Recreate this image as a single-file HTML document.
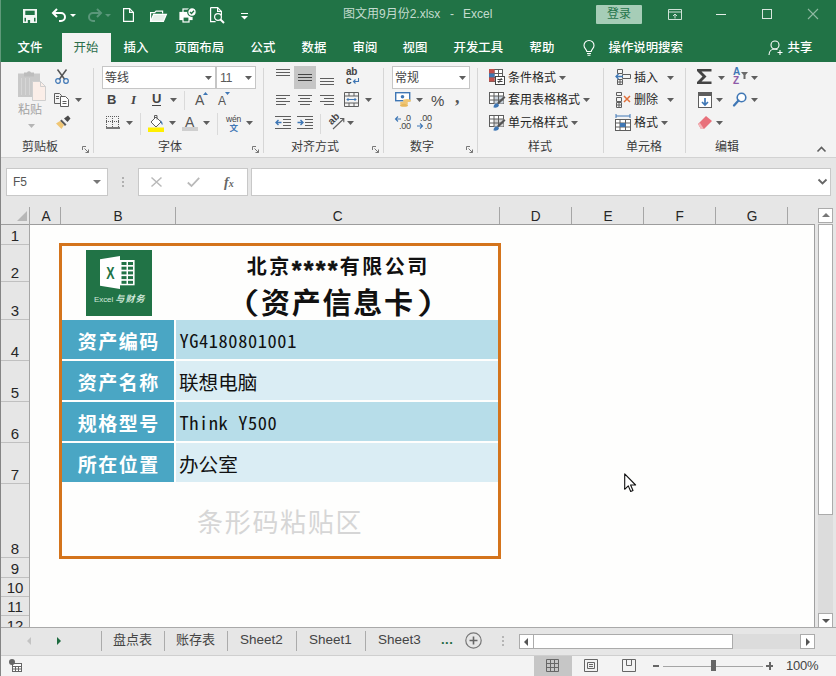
<!DOCTYPE html>
<html lang="zh-CN">
<head>
<meta charset="utf-8">
<title>图文用9月份2.xlsx - Excel</title>
<style>
*{box-sizing:border-box;margin:0;padding:0}
html,body{width:836px;height:676px;overflow:hidden;background:#e6e6e6}
body{position:relative;font-family:"Liberation Sans","Noto Sans CJK SC",sans-serif;font-size:12px;color:#262626}
.a{position:absolute}
.t{position:absolute;white-space:nowrap;line-height:1}
svg{position:absolute;overflow:visible}
/* title + tabs */
#green{left:0;top:0;width:836px;height:62px;background:#217346}
.tab{position:absolute;top:39.600px;color:#fff;font-weight:500;font-size:12.400px;margin-left:-.5px;line-height:16px;white-space:nowrap}
#tabon{left:62px;top:33px;width:49px;height:29px;background:#f3f3f3}
/* ribbon */
#ribbon{left:0;top:62px;width:836px;height:95px;background:#f3f3f3}
#ribline{left:0;top:157px;width:836px;height:1px;background:#d2d2d2}
.sep{position:absolute;top:68px;width:1px;height:85px;background:#d6d6d6}
.gl{position:absolute;top:139px;font-size:12px;line-height:16px;color:#3b3b3b;white-space:nowrap;text-align:center}
.rt{position:absolute;font-size:12px;line-height:16px;color:#262626;white-space:nowrap}
.dd{position:absolute;width:0;height:0;border-left:3px solid transparent;border-right:3px solid transparent;border-top:3px solid #606060}
/* formula bar */
.box{position:absolute;background:#fff;border:1px solid #c8c8c8}
/* sheet */
#sheet{left:30px;top:224px;width:785px;height:403px;background:#fefefd}
.ch span{display:inline-block;transform:scaleX(.88)}
.ch{position:absolute;top:207px;height:17px;font-size:15.500px;line-height:18px;padding-left:2px;text-align:center;color:#262626;border-right:1px solid #a6a6a6}
.rh{position:absolute;left:1px;width:28px;font-size:15px;text-align:center;color:#262626;border-bottom:1px solid #c0c0c0;background:#e6e6e6}
.rh span{position:absolute;left:0;right:0;bottom:0;line-height:17px}
.mono{font-family:"Noto Sans CJK SC",sans-serif;font-feature-settings:"hwid";font-size:18.400px;letter-spacing:.6px;line-height:24px;color:#111;white-space:pre}
.ast{font-family:"Liberation Sans",sans-serif;font-size:25px;line-height:1;letter-spacing:2.300px;position:relative;top:5px;-webkit-text-stroke:.5px #111}
.par{display:inline-block;font-weight:500;transform:scaleX(1.4)}
</style>
</head>
<body>
<div class="a" id="green"></div>
<div class="a" id="tabon"></div>
<!--TITLE-->
<!-- quick access toolbar -->
<svg style="left:23px;top:9px" width="14" height="14" viewBox="0 0 14 14"><path d="M0 0h14v14H0z" fill="#f1f6f3"/><rect x="2.300" y="1.700" width="9.400" height="4.300" fill="#217346"/><rect x="1.500" y="8.800" width="1.500" height="3.700" fill="#217346"/><rect x="11" y="8.800" width="1.500" height="3.700" fill="#217346"/><rect x="4.800" y="11" width="2.300" height="3" fill="#217346"/></svg>
<svg style="left:51px;top:8px" width="16" height="14" viewBox="0 0 16 14" fill="none" stroke="#fff" stroke-width="2"><path d="M6 1L2 5l4 4"/><path d="M2.5 5H10a4 4 0 0 1 0 8H8"/></svg>
<div class="dd" style="left:70px;top:14px;border-top-color:#fff"></div>
<svg style="left:87px;top:8px" width="16" height="14" viewBox="0 0 16 14" fill="none" stroke="#5a977a" stroke-width="2"><path d="M10 1l4 4-4 4"/><path d="M13.5 5H6a4 4 0 0 0 0 8h2"/></svg>
<div class="dd" style="left:105px;top:14px;border-top-color:#5a977a"></div>
<svg style="left:123px;top:8px" width="11" height="14" viewBox="0 0 11 14" fill="none" stroke="#fff" stroke-width="1.2"><path d="M.6.6h6l3.800 3.800v9H.6z"/><path d="M6.600.6v3.800h3.800"/></svg>
<svg style="left:150px;top:9px" width="17" height="13" viewBox="0 0 17 13" fill="none" stroke="#fff" stroke-width="1.2"><path d="M.6 12.400V3.600h4l1.500-1.500h6.500v2.500"/><path d="M.6 12.400l3-7h12.800l-3 7z" fill="#e6efe9"/></svg>
<svg style="left:179px;top:7px" width="18" height="17" viewBox="0 0 18 17" fill="none" stroke="#fff" stroke-width="1.2"><rect x="1" y="5.500" width="12" height="7" fill="#fff"/><rect x="4" y="10" width="6" height="5" fill="#217346"/><rect x="4" y="2" width="6" height="3.500" fill="#217346"/><circle cx="13" cy="5" r="4.300" fill="#fff" stroke="#217346"/><path d="M11 5l1.500 1.500L15 3.800" stroke="#217346" stroke-width="1.300"/></svg>
<svg style="left:210px;top:7px" width="16" height="17" viewBox="0 0 16 17" fill="none" stroke="#fff" stroke-width="1.2"><path d="M.6.6h7l3.800 3.800v4M.6.6v14h5"/><path d="M7.600.6v3.800h3.800"/><circle cx="8" cy="10" r="3.400"/><path d="M10.500 12.500l3.500 3.500" stroke-width="2"/></svg>
<div class="a" style="left:241px;top:13px;width:7px;height:1px;background:#fff"></div>
<svg style="left:241px;top:16px" width="7" height="4" viewBox="0 0 7 4"><path d="M0 0h7L3.500 3.500z" fill="#fff"/></svg>
<div class="t" style="left:343px;top:7px;width:150px;height:15px;font-size:12px;line-height:15px;color:#c4dccf;white-space:pre"><span class="a" style="left:0;top:0">图文用9月份2.xlsx</span><span class="a" style="left:107px;top:0">-</span><span class="a" style="left:120px;top:0">Excel</span></div>
<div class="a" style="left:596px;top:5px;width:46px;height:19px;background:#a6cdb7;border-radius:1px"></div>
<div class="t" style="left:607px;top:7px;font-size:12px;line-height:15px;color:#25744a">登录</div>
<svg style="left:668px;top:9px" width="14" height="11" viewBox="0 0 14 11" fill="none" stroke="#cfe2d7" stroke-width="1"><path d="M.5.5h13v10H.5zM.5 3h13"/><path d="M7 9.500V5M5 7l2-2 2 2"/></svg>
<div class="a" style="left:716px;top:14px;width:10px;height:1px;background:#e4eee8"></div>
<div class="a" style="left:762px;top:9px;width:10px;height:10px;border:1px solid #d8e6de"></div>
<svg style="left:808px;top:9px" width="10" height="10" viewBox="0 0 10 10" stroke="#8fb9a2" stroke-width="1.1"><path d="M0 0l10 10M10 0L0 10"/></svg>
<!--TABS-->
<div class="tab" style="left:18px">文件</div>
<div class="tab" style="left:74px;color:#2d6e4b;font-weight:400">开始</div>
<div class="tab" style="left:124px">插入</div>
<div class="tab" style="left:175px">页面布局</div>
<div class="tab" style="left:251px">公式</div>
<div class="tab" style="left:302px">数据</div>
<div class="tab" style="left:353px">审阅</div>
<div class="tab" style="left:403px">视图</div>
<div class="tab" style="left:454px">开发工具</div>
<div class="tab" style="left:530px">帮助</div>
<svg style="left:583px;top:40px" width="12" height="16" viewBox="0 0 12 16" fill="none" stroke="#fff" stroke-width="1.1"><path d="M3.800 11.500c0-2-2.800-3-2.800-6a5 5 0 0 1 10 0c0 3-2.800 4-2.800 6z"/><path d="M4 13.500h4M4.500 15.300h3"/></svg>
<div class="tab" style="left:609px">操作说明搜索</div>
<svg style="left:768px;top:40px" width="16" height="16" viewBox="0 0 16 16" fill="none" stroke="#fff" stroke-width="1.1"><circle cx="7" cy="5" r="4"/><path d="M1 15c0-4 3-6 6-6 1 0 2 .3 2.500.6"/><path d="M12 10v5M9.500 12.500h5"/></svg>
<div class="tab" style="left:788px">共享</div>
<div class="a" id="ribbon"></div>
<div class="a" id="ribline"></div>
<!--RIBBON-->
<div class="sep" style="left:93px"></div>
<div class="sep" style="left:263px"></div>
<div class="sep" style="left:383px"></div>
<div class="sep" style="left:477px"></div>
<div class="sep" style="left:603px"></div>
<div class="sep" style="left:685px"></div>
<svg style="left:18px;top:70px" width="28" height="31" viewBox="0 0 28 31">
<rect x="0" y="3.500" width="22" height="23.500" fill="#c9c9c9"/>
<path d="M6 3.500V2.500h3a2.200 2.200 0 0 1 4 0h3v4H6z" fill="#bdbdbd"/>
<g stroke="#d6d6d6" stroke-width="1"><path d="M3.500 8v17M7.500 8v17M11.500 8v17"/></g>
<path d="M14.500 11.500h8l5 5v14h-13z" fill="#fbeee8" stroke="#cfcfcf"/>
<path d="M22.500 11.500v5h5" fill="none" stroke="#cfcfcf"/>
</svg>
<div class="rt" style="left:18px;top:102px;color:#a3a3a3">粘贴</div>
<svg style="left:27.5px;top:124px" width="7" height="4" viewBox="0 0 7 4"><path d="M0 0h7L3.500 4z" fill="#b5b5b5"/></svg>
<svg style="left:55px;top:69px" width="14" height="15" viewBox="0 0 14 15" fill="none">
<path d="M2.500 0.500L9.800 10.500M11.500 0.500L4.200 10.500" stroke="#555" stroke-width="1.5"/>
<circle cx="3" cy="12" r="2.300" stroke="#3f77b5" stroke-width="1.200"/><circle cx="11" cy="12" r="2.300" stroke="#3f77b5" stroke-width="1.200"/></svg>
<svg style="left:54px;top:93px" width="15" height="14" viewBox="0 0 15 14" fill="#f3f3f3" stroke="#5e5e5e" stroke-width="1">
<path d="M.5.5h5l2 2v8h-7z"/><path d="M6.500 3.500h5l3 3v7h-8z" fill="#fff"/><path d="M8.500 8.500h4M8.500 10.500h4M2 3.500h3M2 5.500h3" stroke-width="1"/></svg>
<svg style="left:75.0px;top:98px" width="7" height="4" viewBox="0 0 7 4"><path d="M0 0h7L3.500 4z" fill="#5e5e5e"/></svg>
<svg style="left:55px;top:115px" width="16" height="14" viewBox="0 0 16 14">
<path d="M9 3.500l3.500 3.500 3-3.500L13 .5z" fill="#4a4a4a"/><path d="M6.500 4.500l5 5-1.500 1.500-5-5z" fill="#5a5a5a"/>
<path d="M1 8.500l4-2.500 4 4-2.500 4z" fill="#f0c674"/></svg>
<div class="gl" style="left:22px">剪贴板</div>
<svg style="left:82px;top:146px" width="7" height="7" viewBox="0 0 7 7" fill="none" stroke="#777" stroke-width="1"><path d="M.5 4V.5H4"/><path d="M2.500 2.500l4 4M6.500 3.500v3h-3"/></svg>
<div class="box" style="left:102px;top:66px;width:114px;height:23px;border-color:#c6c6c6"></div>
<div class="box" style="left:216px;top:66px;width:40px;height:23px;border-color:#c6c6c6"></div>
<div class="rt" style="left:105px;top:70px;color:#444">等线</div>
<svg style="left:205.0px;top:76px" width="7" height="4" viewBox="0 0 7 4"><path d="M0 0h7L3.500 4z" fill="#5e5e5e"/></svg>
<div class="rt" style="left:220px;top:70px;color:#5a5a5a;font-size:12.500px;letter-spacing:-.5px">11</div>
<svg style="left:245.0px;top:76px" width="7" height="4" viewBox="0 0 7 4"><path d="M0 0h7L3.500 4z" fill="#5e5e5e"/></svg>
<div class="rt" style="left:107px;top:92px;font-weight:bold;font-size:13px;color:#444">B</div>
<div class="rt" style="left:131px;top:92px;font-weight:bold;font-style:italic;font-size:13px;color:#444;font-family:'Liberation Serif',serif">I</div>
<div class="rt" style="left:152px;top:91px;font-weight:bold;font-size:13px;color:#444">U</div>
<div class="a" style="left:152px;top:105px;width:9px;height:1px;background:#444"></div>
<svg style="left:170.0px;top:98px" width="7" height="4" viewBox="0 0 7 4"><path d="M0 0h7L3.500 4z" fill="#5e5e5e"/></svg>
<div class="a" style="left:184px;top:91px;width:1px;height:19px;background:#dadada"></div>
<div class="rt" style="left:195px;top:92px;font-size:14px;color:#555">A</div>
<svg style="left:203px;top:92px" width="5" height="3" viewBox="0 0 5 3"><path d="M0 3L2.500 0 5 3z" fill="#3f77b5"/></svg>
<div class="rt" style="left:218px;top:93px;font-size:12px;color:#555">A</div>
<svg style="left:225px;top:92px" width="5" height="3" viewBox="0 0 5 3"><path d="M0 0h5L2.500 3z" fill="#3f77b5"/></svg>
<svg style="left:106px;top:116px" width="14" height="13" viewBox="0 0 14 13" fill="none" stroke="#5e5e5e" stroke-width="1">
<path d="M.5 0v11M6.500 0v11M12.500 0v11M0 .5h13M0 5.500h13" stroke-dasharray="1 1"/><path d="M0 12h14" stroke="#444" stroke-width="1.400"/></svg>
<svg style="left:126.0px;top:121px" width="7" height="4" viewBox="0 0 7 4"><path d="M0 0h7L3.500 4z" fill="#5e5e5e"/></svg>
<div class="a" style="left:140px;top:113px;width:1px;height:22px;background:#dadada"></div>
<svg style="left:148px;top:114px" width="17" height="18" viewBox="0 0 17 18">
<path d="M3 8l5-5 5 5-5 5z" fill="#fff" stroke="#5e5e5e" stroke-width="1"/><path d="M6.500 4.500V1.500h2.500v4" fill="none" stroke="#5e5e5e"/>
<path d="M12 6c2 1 3 3 2.500 5-1-.5-1.500-2-2-3.500z" fill="#3f77b5"/><rect x="0" y="13.500" width="16" height="4.500" fill="#ffef00"/></svg>
<svg style="left:169.0px;top:121px" width="7" height="4" viewBox="0 0 7 4"><path d="M0 0h7L3.500 4z" fill="#5e5e5e"/></svg>
<div class="rt" style="left:185px;top:114px;font-size:14px;color:#555">A</div>
<div class="a" style="left:182px;top:127px;width:16px;height:4px;background:#cfcfcf"></div>
<svg style="left:203.0px;top:121px" width="7" height="4" viewBox="0 0 7 4"><path d="M0 0h7L3.500 4z" fill="#5e5e5e"/></svg>
<div class="a" style="left:217px;top:113px;width:1px;height:22px;background:#dadada"></div>
<div class="rt" style="left:226px;top:113px;font-size:8.500px;line-height:12px;color:#444;letter-spacing:-.2px">wén</div>
<div class="rt" style="left:229.500px;top:122px;font-size:8.500px;line-height:12px;color:#3f77b5;font-weight:bold">文</div>
<svg style="left:246.0px;top:121px" width="7" height="4" viewBox="0 0 7 4"><path d="M0 0h7L3.500 4z" fill="#5e5e5e"/></svg>
<div class="gl" style="left:158px">字体</div>
<svg style="left:252px;top:146px" width="7" height="7" viewBox="0 0 7 7" fill="none" stroke="#777" stroke-width="1"><path d="M.5 4V.5H4"/><path d="M2.500 2.500l4 4M6.500 3.500v3h-3"/></svg>
<div class="a" style="left:294px;top:66px;width:22px;height:23px;background:#c6c6c6"></div>
<svg style="left:276px;top:69px" width="14" height="9" viewBox="0 0 14 9" fill="#5e5e5e"><rect x="0" y="0" width="14" height="1"/><rect x="0" y="3" width="14" height="1"/><rect x="0" y="6" width="14" height="1"/></svg>
<svg style="left:298px;top:74px" width="14" height="9" viewBox="0 0 14 9" fill="#444"><rect x="0" y="0" width="14" height="1"/><rect x="0" y="3" width="14" height="1"/><rect x="0" y="6" width="14" height="1"/></svg>
<svg style="left:320px;top:78px" width="14" height="9" viewBox="0 0 14 9" fill="#5e5e5e"><rect x="0" y="0" width="14" height="1"/><rect x="0" y="3" width="14" height="1"/><rect x="0" y="6" width="14" height="1"/></svg>
<svg style="left:276px;top:95px" width="14" height="12" viewBox="0 0 14 12" fill="#5e5e5e"><rect x="0" y="0" width="14" height="1"/><rect x="0" y="3" width="10" height="1"/><rect x="0" y="6" width="14" height="1"/><rect x="0" y="9" width="10" height="1"/></svg>
<svg style="left:298px;top:95px" width="14" height="12" viewBox="0 0 14 12" fill="#5e5e5e"><rect x="0" y="0" width="14" height="1"/><rect x="2" y="3" width="10" height="1"/><rect x="0" y="6" width="14" height="1"/><rect x="2" y="9" width="10" height="1"/></svg>
<svg style="left:320px;top:95px" width="14" height="12" viewBox="0 0 14 12" fill="#5e5e5e"><rect x="0" y="0" width="14" height="1"/><rect x="4" y="3" width="10" height="1"/><rect x="0" y="6" width="14" height="1"/><rect x="4" y="9" width="10" height="1"/></svg>
<div class="rt" style="left:346px;top:67px;font-size:10px;line-height:9px;color:#444;font-weight:bold;letter-spacing:-.2px">ab<br>c</div>
<svg style="left:353px;top:78px" width="6" height="6" viewBox="0 0 6 6" fill="none" stroke="#3f77b5" stroke-width="1.100"><path d="M5.500 0v3.500H1M2.500 1.500l-2 2 2 2"/></svg>
<svg style="left:344px;top:92px" width="15" height="15" viewBox="0 0 15 15" fill="none" stroke="#5e5e5e" stroke-width="1">
<path d="M.5.500h14v14H.5z"/><path d="M.5 4h14M.5 11h14M5 .5V4M10 .5V4M5 11v3.500M10 11v3.500"/><path d="M3 7.500h9M4.500 6L3 7.500 4.500 9M10.500 6L12 7.500 10.500 9" stroke="#3f77b5"/></svg>
<svg style="left:365.0px;top:98px" width="7" height="4" viewBox="0 0 7 4"><path d="M0 0h7L3.500 4z" fill="#5e5e5e"/></svg>
<svg style="left:275px;top:116px" width="16" height="13" viewBox="0 0 16 13" fill="none">
<path d="M0 .5h16M8 3.500h8M8 6.500h8M8 9.500h8M0 12.500h16" stroke="#5e5e5e"/><path d="M6.500 6.500H1M3.500 4L1 6.500 3.500 9" stroke="#3f77b5" stroke-width="1.400"/></svg>
<svg style="left:297px;top:116px" width="16" height="13" viewBox="0 0 16 13" fill="none">
<path d="M0 .5h16M8 3.500h8M8 6.500h8M8 9.500h8M0 12.500h16" stroke="#5e5e5e"/><path d="M.5 6.500H6M3.500 4L6 6.500 3.500 9" stroke="#3f77b5" stroke-width="1.400"/></svg>
<div class="a" style="left:320px;top:114px;width:1px;height:20px;background:#dadada"></div>
<div class="rt" style="left:328px;top:113px;font-size:10px;line-height:12px;color:#444;font-weight:bold;transform:rotate(-45deg);transform-origin:50% 50%">ab</div>
<svg style="left:331px;top:117px" width="14" height="13" viewBox="0 0 14 13" fill="none" stroke="#5e5e5e" stroke-width="1.100"><path d="M2 12L12.500 2M9 1.500h3.800v3.800"/></svg>
<svg style="left:347.0px;top:121px" width="7" height="4" viewBox="0 0 7 4"><path d="M0 0h7L3.500 4z" fill="#5e5e5e"/></svg>
<div class="gl" style="left:291px">对齐方式</div>
<svg style="left:372px;top:146px" width="7" height="7" viewBox="0 0 7 7" fill="none" stroke="#777" stroke-width="1"><path d="M.5 4V.5H4"/><path d="M2.500 2.500l4 4M6.500 3.500v3h-3"/></svg>
<div class="box" style="left:392px;top:66px;width:78px;height:23px;border-color:#c6c6c6"></div>
<div class="rt" style="left:395px;top:70px;color:#444">常规</div>
<svg style="left:459.0px;top:76px" width="7" height="4" viewBox="0 0 7 4"><path d="M0 0h7L3.500 4z" fill="#5e5e5e"/></svg>
<svg style="left:395px;top:92px" width="17" height="15" viewBox="0 0 17 15">
<rect x=".7" y=".7" width="14" height="8" fill="#fff" stroke="#3f77b5" stroke-width="1.400"/><circle cx="7.500" cy="4.700" r="1.800" fill="#3f77b5"/>
<ellipse cx="12" cy="8.500" rx="4" ry="1.500" fill="#f0c674"/><ellipse cx="9" cy="11" rx="4" ry="1.500" fill="#f0c674"/><ellipse cx="9" cy="13.300" rx="4" ry="1.500" fill="#e8b85c"/></svg>
<svg style="left:416.0px;top:98px" width="7" height="4" viewBox="0 0 7 4"><path d="M0 0h7L3.500 4z" fill="#5e5e5e"/></svg>
<div class="rt" style="left:431px;top:92px;font-size:15px;line-height:18px;color:#4a4a4a">%</div>
<div class="rt" style="left:455px;top:88px;font-size:18px;line-height:18px;color:#555;font-weight:bold;font-family:'Liberation Serif',serif">,</div>
<div class="rt" style="left:399px;top:114px;font-size:9px;line-height:8px;color:#444;text-align:right;letter-spacing:-.2px">.0<br>.00</div>
<svg style="left:395px;top:116px" width="6" height="6" viewBox="0 0 6 6" fill="none" stroke="#3f77b5" stroke-width="1.100"><path d="M6 3H.8M3 .5L.5 3 3 5.500"/></svg>
<div class="rt" style="left:420px;top:114px;font-size:9px;line-height:8px;color:#444;text-align:right;letter-spacing:-.2px">.00<br>.0</div>
<svg style="left:417px;top:123px" width="6" height="6" viewBox="0 0 6 6" fill="none" stroke="#3f77b5" stroke-width="1.100"><path d="M0 3h5.200M3 .5L5.500 3 3 5.500"/></svg>
<div class="gl" style="left:410px">数字</div>
<svg style="left:466px;top:146px" width="7" height="7" viewBox="0 0 7 7" fill="none" stroke="#777" stroke-width="1"><path d="M.5 4V.5H4"/><path d="M2.500 2.500l4 4M6.500 3.500v3h-3"/></svg>
<svg style="left:489px;top:69px" width="16" height="16" viewBox="0 0 16 16">
<rect x=".5" y=".5" width="13" height="12" fill="#fff" stroke="#5e5e5e"/><path d="M.5 4.500h13M.5 8.500h13M5 .5v12M9.500 .5v12" stroke="#5e5e5e" fill="none"/>
<rect x="0" y="0" width="5.500" height="4.500" fill="#c0504d"/><rect x="0" y="4.500" width="5.500" height="4" fill="#3f77b5"/><rect x="0" y="8.500" width="5.500" height="4" fill="#c0504d"/>
<rect x="6.500" y="7.500" width="9" height="8" fill="#fff" stroke="#444"/><path d="M8.500 10.500h5M8.500 12.500h5M12.500 9l-3 5" stroke="#444" fill="none"/></svg>
<div class="rt" style="left:508px;top:70px">条件格式</div>
<svg style="left:559.0px;top:76px" width="7" height="4" viewBox="0 0 7 4"><path d="M0 0h7L3.500 4z" fill="#5e5e5e"/></svg>
<svg style="left:489px;top:92px" width="17" height="16" viewBox="0 0 17 16">
<rect x=".5" y=".5" width="14" height="11" fill="#fff" stroke="#5e5e5e"/><rect x="5" y="4" width="9.500" height="7.500" fill="#c9d3dd"/>
<path d="M.5 4h14M.5 8h14M5 .5v11M9.500 .5v11" stroke="#5e5e5e" fill="none"/>
<path d="M8 11l7-7 1.500 1.500-7 7z" fill="#555"/><path d="M4.500 15.500c0-3 2-4.500 4-4l1.500 1.500c0 2-2.500 3-5.500 2.500z" fill="#3f77b5"/></svg>
<div class="rt" style="left:508px;top:92px">套用表格格式</div>
<svg style="left:583.0px;top:98px" width="7" height="4" viewBox="0 0 7 4"><path d="M0 0h7L3.500 4z" fill="#5e5e5e"/></svg>
<svg style="left:489px;top:115px" width="17" height="16" viewBox="0 0 17 16">
<rect x=".5" y=".5" width="14" height="11" fill="#fff" stroke="#5e5e5e"/><rect x="5" y="4" width="9.500" height="7.500" fill="#d4d4d4"/>
<path d="M.5 4h14M.5 8h14M5 .5v11M9.500 .5v11" stroke="#5e5e5e" fill="none"/>
<path d="M8 11l7-7 1.500 1.500-7 7z" fill="#555"/><path d="M4.500 15.500c0-3 2-4.500 4-4l1.500 1.500c0 2-2.500 3-5.500 2.500z" fill="#3f77b5"/></svg>
<div class="rt" style="left:508px;top:115px">单元格样式</div>
<svg style="left:571.0px;top:121px" width="7" height="4" viewBox="0 0 7 4"><path d="M0 0h7L3.500 4z" fill="#5e5e5e"/></svg>
<div class="gl" style="left:528px">样式</div>
<svg style="left:615px;top:69px" width="16" height="16" viewBox="0 0 16 16" fill="none" stroke="#5e5e5e">
<path d="M2.500 .5h5v4h-5zM7.500 5.500h8v4h-8zM2.500 10.500h5v5h-5zM2.500 13h5M5 10.500v5"/><path d="M8 7.500H1M3.500 5L1 7.500 3.500 10" stroke="#3f77b5" stroke-width="1.300"/></svg>
<div class="rt" style="left:634px;top:70px">插入</div>
<svg style="left:667.0px;top:76px" width="7" height="4" viewBox="0 0 7 4"><path d="M0 0h7L3.500 4z" fill="#5e5e5e"/></svg>
<svg style="left:615px;top:92px" width="17" height="16" viewBox="0 0 17 16" fill="none" stroke="#5e5e5e">
<path d="M1.500 .5h5v3h-5zM1.500 5.500h5v4h-5zM1.500 10.500h5v5h-5zM1.500 13h5M4 10.500v5" stroke-dasharray="0"/><path d="M9 4l6 6M15 4l-6 6" stroke="#e0703a" stroke-width="1.500"/></svg>
<div class="rt" style="left:634px;top:92px">删除</div>
<svg style="left:667.0px;top:98px" width="7" height="4" viewBox="0 0 7 4"><path d="M0 0h7L3.500 4z" fill="#5e5e5e"/></svg>
<svg style="left:615px;top:114px" width="16" height="17" viewBox="0 0 16 17" fill="none" stroke="#5e5e5e">
<path d="M1 2h14M1 0v4M15 0v4" stroke="#3f77b5"/><rect x=".5" y="5.500" width="15" height="11" fill="#fff"/><path d="M.5 9h15M.5 13h15M5 5.500v11M10.500 5.500v11"/><rect x="5" y="9" width="5.500" height="4" fill="#3f77b5" stroke="none"/></svg>
<div class="rt" style="left:634px;top:115px">格式</div>
<svg style="left:661.0px;top:121px" width="7" height="4" viewBox="0 0 7 4"><path d="M0 0h7L3.500 4z" fill="#5e5e5e"/></svg>
<div class="gl" style="left:626px">单元格</div>
<svg style="left:697px;top:69px" width="15" height="15" viewBox="0 0 15 15"><path d="M0 0h14.500v2.500H4.500L9.500 7.500 4.500 12.500h10V15H0v-2L5.500 7.500 0 2z" fill="#444"/></svg>
<svg style="left:718.0px;top:76px" width="7" height="4" viewBox="0 0 7 4"><path d="M0 0h7L3.500 4z" fill="#5e5e5e"/></svg>
<div class="rt" style="left:733px;top:67px;font-size:10px;line-height:10px;color:#3f77b5;font-weight:bold">A</div>
<div class="rt" style="left:733px;top:76px;font-size:10px;line-height:10px;color:#8e5aa8;font-weight:bold">Z</div>
<svg style="left:741px;top:72px" width="7" height="7" viewBox="0 0 7 7"><path d="M0 0h7L4.500 3v4h-2V3z" fill="#6b6b6b"/></svg>
<svg style="left:751.0px;top:76px" width="7" height="4" viewBox="0 0 7 4"><path d="M0 0h7L3.500 4z" fill="#5e5e5e"/></svg>
<svg style="left:698px;top:92px" width="14" height="16" viewBox="0 0 14 16"><rect x=".5" y=".5" width="13" height="15" fill="#fff" stroke="#5e5e5e"/><rect x="0" y="0" width="14" height="4" fill="#5e5e5e"/>
<path d="M7 6v7M4 10l3 3 3-3" fill="none" stroke="#3f77b5" stroke-width="1.700"/></svg>
<svg style="left:716.0px;top:98px" width="7" height="4" viewBox="0 0 7 4"><path d="M0 0h7L3.500 4z" fill="#5e5e5e"/></svg>
<svg style="left:733px;top:92px" width="14" height="15" viewBox="0 0 14 15" fill="none"><circle cx="8.500" cy="5.500" r="4.300" stroke="#3f77b5" stroke-width="1.600" fill="#fff"/><path d="M5.500 8.500L1 13.500" stroke="#3f77b5" stroke-width="2.300" stroke-linecap="round"/></svg>
<svg style="left:751.0px;top:98px" width="7" height="4" viewBox="0 0 7 4"><path d="M0 0h7L3.500 4z" fill="#5e5e5e"/></svg>
<svg style="left:698px;top:116px" width="14" height="13" viewBox="0 0 14 13"><path d="M0 8l8-8 6 5-8 8H3z" fill="#e8707a"/><path d="M0 8l3 5h3l-4-6z" fill="#f4b6ba"/></svg>
<svg style="left:716.0px;top:121px" width="7" height="4" viewBox="0 0 7 4"><path d="M0 0h7L3.500 4z" fill="#5e5e5e"/></svg>
<div class="gl" style="left:715px">编辑</div>
<svg style="left:817px;top:146px" width="9" height="6" viewBox="0 0 9 6" fill="none" stroke="#5e5e5e" stroke-width="1.600"><path d="M.5 5.500l4-4 4 4"/></svg>
<!--FORMULA-->
<div class="box" style="left:6px;top:168px;width:102px;height:28px"></div>
<div class="t" style="left:13px;top:175px;font-size:12px;line-height:15px;color:#555">F5</div>
<svg style="left:93px;top:180px" width="8" height="4" viewBox="0 0 8 4"><path d="M0 0h8L4 4z" fill="#777"/></svg>
<svg style="left:122px;top:177px" width="2" height="10" viewBox="0 0 2 10" fill="#b0b0b0"><rect x="0" y="0" width="2" height="2"/><rect x="0" y="4" width="2" height="2"/><rect x="0" y="8" width="2" height="2"/></svg>
<div class="box" style="left:138px;top:168px;width:110px;height:28px"></div>
<svg style="left:151px;top:177px" width="11" height="10" viewBox="0 0 11 10" fill="none" stroke="#b9b9b9" stroke-width="1.500"><path d="M.5 .5l10 9M10.500 .5l-10 9"/></svg>
<svg style="left:187px;top:177px" width="13" height="10" viewBox="0 0 13 10" fill="none" stroke="#b9b9b9" stroke-width="1.800"><path d="M.8 5.500l3.700 3.500L12.200 .8"/></svg>
<div class="t" style="left:224px;top:174px;font-size:14px;line-height:17px;color:#666;font-family:'Liberation Serif',serif;font-style:italic;font-weight:bold">f<span style="font-size:10px">x</span></div>
<div class="box" style="left:251px;top:168px;width:580px;height:28px"></div>
<svg style="left:818px;top:179px" width="9" height="6" viewBox="0 0 9 6" fill="none" stroke="#666" stroke-width="1.800"><path d="M.5 .5l4 4 4-4"/></svg>
<!--SHEET-->
<div class="a" id="sheet"></div>
<div class="a" style="left:1px;top:224px;width:814px;height:1px;background:#9d9d9d"></div>
<svg style="left:17px;top:211px" width="10" height="10" viewBox="0 0 10 10"><path d="M10 0v10H0z" fill="#b7b7b7"/></svg>
<div class="a" style="left:29px;top:207px;width:1px;height:420px;background:#a6a6a6"></div>
<div class="ch" style="left:30px;width:31px"><span>A</span></div>
<div class="ch" style="left:60px;width:116px"><span>B</span></div>
<div class="ch" style="left:175px;width:325px"><span>C</span></div>
<div class="ch" style="left:499px;width:73px"><span>D</span></div>
<div class="ch" style="left:571px;width:73px"><span>E</span></div>
<div class="ch" style="left:643px;width:73px"><span>F</span></div>
<div class="ch" style="left:715px;width:73px"><span>G</span></div>
<div class="rh" style="top:225px;height:20px"><span>1</span></div>
<div class="rh" style="top:245px;height:37px"><span>2</span></div>
<div class="rh" style="top:282px;height:38px"><span>3</span></div>
<div class="rh" style="top:320px;height:41px"><span>4</span></div>
<div class="rh" style="top:361px;height:41px"><span>5</span></div>
<div class="rh" style="top:402px;height:41px"><span>6</span></div>
<div class="rh" style="top:443px;height:41px"><span>7</span></div>
<div class="rh" style="top:484px;height:74px"><span>8</span></div>
<div class="rh" style="top:558px;height:20px"><span>9</span></div>
<div class="rh" style="top:578px;height:19px"><span>10</span></div>
<div class="rh" style="top:597px;height:19px"><span>11</span></div>
<div class="rh" style="top:616px;height:11px;border:0;overflow:hidden"><span style="bottom:auto;top:1px">12</span></div>
<div class="a" style="left:814px;top:224px;width:1px;height:404px;background:#a0a0a0"></div>
<div class="a" style="left:815px;top:207px;width:21px;height:421px;background:#e6e6e6"></div>
<div class="a" style="left:818px;top:208px;width:15px;height:15px;background:#fff;border:1px solid #ababab"></div>
<svg style="left:821.500px;top:213px" width="8" height="4" viewBox="0 0 8 4"><path d="M0 4L4 0l4 4z" fill="#777"/></svg>
<div class="a" style="left:818px;top:224px;width:15px;height:291px;background:#fff;border:1px solid #ababab"></div>
<div class="a" style="left:818px;top:515px;width:15px;height:98px;background:#dcdcdc"></div>
<div class="a" style="left:818px;top:613px;width:15px;height:15px;background:#fff;border:1px solid #ababab"></div>
<svg style="left:821.500px;top:619px" width="8" height="4" viewBox="0 0 8 4"><path d="M0 0h8L4 4z" fill="#555"/></svg>
<svg style="left:624px;top:473px" width="13" height="20" viewBox="0 0 13 20"><path d="M.7 .8v15.500l3.600-3.400 2.400 5.600 2.300-1-2.400-5.500h5z" fill="#fff" stroke="#111" stroke-width="1.100" stroke-linejoin="round"/></svg>
<!--CARD-->
<div class="a" style="left:59px;top:243px;width:442px;height:316px;border:3px solid #d4741c;background:#fefefd"></div>
<div class="a" style="left:86px;top:250px;width:66px;height:66px;background:#217346"></div>
<svg style="left:86px;top:250px" width="66" height="66" viewBox="0 0 66 66">
<rect x="33" y="10" width="15.600" height="25.300" fill="#fff"/>
<g fill="#217346"><rect x="35.500" y="12" width="5" height="3"/><rect x="42" y="12" width="5" height="3"/><rect x="35.500" y="16.700" width="5" height="3"/><rect x="42" y="16.700" width="5" height="3"/><rect x="35.500" y="21.400" width="5" height="3"/><rect x="42" y="21.400" width="5" height="3"/><rect x="35.500" y="26.100" width="5" height="3"/><rect x="42" y="26.100" width="5" height="3"/><rect x="35.500" y="30.800" width="5" height="3"/><rect x="42" y="30.800" width="5" height="3"/></g>
<path d="M14 9.200L34 6.100v32.900L14 35.800z" fill="#fff"/>
<text x="24.300" y="28.500" text-anchor="middle" font-family="Liberation Sans, sans-serif" font-weight="bold" font-size="16.500" fill="#217346" textLength="8.300" lengthAdjust="spacingAndGlyphs">X</text>
</svg>
<div class="t" style="left:94px;top:294px;font-size:8px;line-height:10px;color:#d2e9dc;letter-spacing:-.1px">Excel <span style="font-family:'Noto Sans CJK SC',sans-serif;font-weight:bold;font-style:italic;font-size:9px;letter-spacing:1.200px">与财务</span></div>
<div class="t" style="left:175px;top:253px;width:324px;text-align:center;font-family:'Noto Sans CJK SC',sans-serif;font-weight:bold;font-size:20px;line-height:24px;color:#111;letter-spacing:2.500px;text-indent:2.500px">北京<span class="ast">****</span>有限公司</div>
<div class="t" style="left:175px;top:285px;width:324px;text-align:center;font-family:'Noto Sans CJK SC',sans-serif;font-weight:bold;font-size:29px;line-height:32px;color:#111;letter-spacing:1.700px;text-indent:1.700px"><span class="par" style="transform-origin:95% 50%">（</span>资产信息卡<span class="par" style="transform-origin:5% 50%">）</span></div>
<div class="a" style="left:62px;top:320px;width:112px;height:39px;background:#4aa6c4"></div>
<div class="a" style="left:176px;top:320px;width:322px;height:39px;background:#b7dde9"></div>
<div class="t" style="left:62px;top:329px;width:112px;text-align:center;font-family:'Noto Sans CJK SC',sans-serif;font-weight:bold;font-size:19px;line-height:24px;color:#fff;letter-spacing:1.500px;text-indent:1.500px">资产编码</div>
<div class="t mono" style="left:179.400px;top:328px">YG4180801001</div>
<div class="a" style="left:62px;top:361px;width:112px;height:39px;background:#4aa6c4"></div>
<div class="a" style="left:176px;top:361px;width:322px;height:39px;background:#daedf4"></div>
<div class="t" style="left:62px;top:370px;width:112px;text-align:center;font-family:'Noto Sans CJK SC',sans-serif;font-weight:bold;font-size:19px;line-height:24px;color:#fff;letter-spacing:1.500px;text-indent:1.500px">资产名称</div>
<div class="t" style="left:179px;top:370px;font-family:'Noto Sans CJK SC',sans-serif;font-size:19.600px;line-height:24px;color:#111">联想电脑</div>
<div class="a" style="left:62px;top:402px;width:112px;height:39px;background:#4aa6c4"></div>
<div class="a" style="left:176px;top:402px;width:322px;height:39px;background:#b7dde9"></div>
<div class="t" style="left:62px;top:411px;width:112px;text-align:center;font-family:'Noto Sans CJK SC',sans-serif;font-weight:bold;font-size:19px;line-height:24px;color:#fff;letter-spacing:1.500px;text-indent:1.500px">规格型号</div>
<div class="t mono" style="left:179.400px;top:410px">Think Y500</div>
<div class="a" style="left:62px;top:443px;width:112px;height:39px;background:#4aa6c4"></div>
<div class="a" style="left:176px;top:443px;width:322px;height:39px;background:#daedf4"></div>
<div class="t" style="left:62px;top:452px;width:112px;text-align:center;font-family:'Noto Sans CJK SC',sans-serif;font-weight:bold;font-size:19px;line-height:24px;color:#fff;letter-spacing:1.500px;text-indent:1.500px">所在位置</div>
<div class="t" style="left:179px;top:452px;font-family:'Noto Sans CJK SC',sans-serif;font-size:19.600px;line-height:24px;color:#111">办公室</div>
<div class="t" style="left:197px;top:506px;font-family:'Noto Sans CJK SC',sans-serif;font-weight:400;font-size:26px;line-height:30px;color:#d6d6d6;letter-spacing:1.700px">条形码粘贴区</div>
<!--BOTTOM-->
<div class="a" style="left:0;top:627px;width:836px;height:28px;background:#e6e6e6;border-top:1px solid #a9a9a9"></div>
<div class="a" style="left:0;top:655px;width:836px;height:21px;background:#f3f3f3;border-top:1px solid #cfcfcf"></div>
<svg style="left:27px;top:637px" width="4" height="8" viewBox="0 0 4 8"><path d="M4 0v8L0 4z" fill="#c3c3c3"/></svg>
<svg style="left:57px;top:637px" width="4" height="8" viewBox="0 0 4 8"><path d="M0 0v8l4-4z" fill="#1e6b40"/></svg>
<div class="a" style="left:101px;top:631px;width:1px;height:20px;background:#ababab"></div>
<div class="a" style="left:164px;top:631px;width:1px;height:20px;background:#ababab"></div>
<div class="a" style="left:227px;top:631px;width:1px;height:20px;background:#ababab"></div>
<div class="a" style="left:296px;top:631px;width:1px;height:20px;background:#ababab"></div>
<div class="a" style="left:365px;top:631px;width:1px;height:20px;background:#ababab"></div>
<div class="t" style="left:113px;top:632px;font-size:13px;line-height:16px;color:#444">盘点表</div>
<div class="t" style="left:176px;top:632px;font-size:13px;line-height:16px;color:#444">账存表</div>
<div class="t" style="left:240px;top:632px;font-size:13.500px;line-height:16px;color:#444;letter-spacing:0">Sheet2</div>
<div class="t" style="left:309px;top:632px;font-size:13.500px;line-height:16px;color:#444;letter-spacing:0">Sheet1</div>
<div class="t" style="left:378px;top:632px;font-size:13.500px;line-height:16px;color:#444;letter-spacing:0">Sheet3</div>
<div class="t" style="left:441px;top:632px;font-size:13px;line-height:16px;color:#1e6b40;font-weight:bold;letter-spacing:.5px">...</div>
<svg style="left:465px;top:632px" width="17" height="17" viewBox="0 0 17 17" fill="none" stroke="#777" stroke-width="1.200"><circle cx="8.500" cy="8.500" r="7.700"/><path d="M8.500 4.500v8M4.500 8.500h8" stroke="#666" stroke-width="1.600"/></svg>
<svg style="left:502px;top:636px" width="2" height="10" viewBox="0 0 2 10" fill="#b5b5b5"><rect x="0" y="0" width="2" height="2"/><rect x="0" y="4" width="2" height="2"/><rect x="0" y="8" width="2" height="2"/></svg>
<div class="a" style="left:519px;top:634px;width:296px;height:15px;background:#dcdcdc"></div>
<div class="a" style="left:519px;top:634px;width:15px;height:15px;background:#fff;border:1px solid #ababab"></div>
<svg style="left:524px;top:638px" width="4" height="8" viewBox="0 0 4 8"><path d="M4 0v8L0 4z" fill="#555"/></svg>
<div class="a" style="left:533px;top:634px;width:200px;height:15px;background:#fff;border:1px solid #ababab"></div>
<div class="a" style="left:800px;top:634px;width:15px;height:15px;background:#fff;border:1px solid #ababab"></div>
<svg style="left:806px;top:638px" width="4" height="8" viewBox="0 0 4 8"><path d="M0 0v8l4-4z" fill="#555"/></svg>
<svg style="left:9px;top:659px" width="13" height="13" viewBox="0 0 13 13"><rect x="3.500" y="4.500" width="9" height="8" fill="#fff" stroke="#666"/><path d="M3.500 7.500h9M3.500 10h9M6.500 7.500v5M9.500 7.500v5" stroke="#666" fill="none"/><circle cx="3" cy="3" r="3" fill="#666"/></svg>
<div class="a" style="left:534px;top:656px;width:38px;height:20px;background:#c6c6c6"></div>
<svg style="left:546px;top:659px" width="13" height="13" viewBox="0 0 13 13" fill="none" stroke="#666"><path d="M.5 .5h12v12H.5zM.5 4.500h12M.5 8.500h12M4.500 .5v12M8.500 .5v12"/></svg>
<svg style="left:584px;top:659px" width="14" height="13" viewBox="0 0 14 13" fill="none" stroke="#666"><path d="M.5 .5h13v12H.5z"/><path d="M3.500 3.500h7v6h-7zM5 5.500h4M5 7.500h4"/></svg>
<svg style="left:622px;top:659px" width="14" height="13" viewBox="0 0 14 13" fill="none" stroke="#666"><path d="M.5 .5h13v12H.5z"/><path d="M4.500 .5v6h5v-6"/></svg>
<div class="a" style="left:653px;top:665px;width:6px;height:2px;background:#666"></div>
<div class="a" style="left:663px;top:666px;width:100px;height:1px;background:#a5a5a5"></div>
<div class="a" style="left:711px;top:660px;width:5px;height:11px;background:#666"></div>
<div class="a" style="left:766px;top:665px;width:7px;height:2px;background:#666"></div><div class="a" style="left:768.500px;top:662px;width:2px;height:8px;background:#666"></div>
<div class="t" style="left:786px;top:658px;font-size:13px;line-height:16px;color:#444;letter-spacing:-.2px">100%</div>
<div class="a" style="left:0;top:0;width:1px;height:676px;background:#858585"></div><div class="a" style="left:0;top:0;width:1px;height:62px;background:#5f9a7a"></div>
</body>
</html>
